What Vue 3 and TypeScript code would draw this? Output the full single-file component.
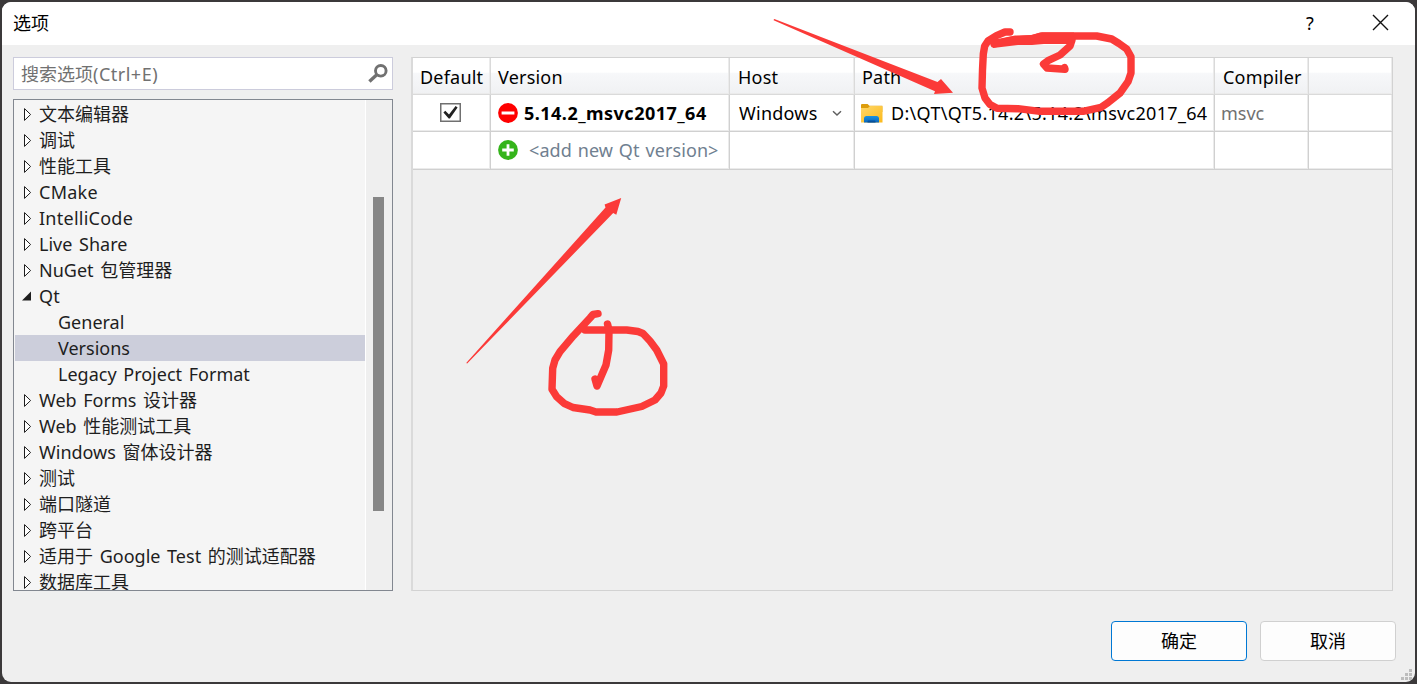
<script setup lang="ts">
interface TreeItem {
  label: string
  kind: 'closed' | 'open' | 'child'
  selected?: boolean
  wide?: boolean
}

const items: TreeItem[] = [
  { label: '文本编辑器', kind: 'closed' },
  { label: '调试', kind: 'closed' },
  { label: '性能工具', kind: 'closed' },
  { label: 'CMake', kind: 'closed', wide: true },
  { label: 'IntelliCode', kind: 'closed', wide: true },
  { label: 'Live Share', kind: 'closed' },
  { label: 'NuGet 包管理器', kind: 'closed' },
  { label: 'Qt', kind: 'open', wide: true },
  { label: 'General', kind: 'child' },
  { label: 'Versions', kind: 'child', selected: true },
  { label: 'Legacy Project Format', kind: 'child' },
  { label: 'Web Forms 设计器', kind: 'closed' },
  { label: 'Web 性能测试工具', kind: 'closed' },
  { label: 'Windows 窗体设计器', kind: 'closed' },
  { label: '测试', kind: 'closed' },
  { label: '端口隧道', kind: 'closed' },
  { label: '跨平台', kind: 'closed' },
  { label: '适用于 Google Test 的测试适配器', kind: 'closed' },
  { label: '数据库工具', kind: 'closed' },
]

const headers: string[] = ['Default', 'Version', 'Host', 'Path', 'Compiler', '']
</script>

<template>
  <div class="desktop">
    <div class="dialog">
      <header class="titlebar">
        <span class="title">选项</span>
        <span class="help">?</span>
        <svg class="close" width="17" height="17" viewBox="0 0 17 17">
          <path d="M1 1 16 16M16 1 1 16" fill="none" stroke="#111" stroke-width="1.4" />
        </svg>
      </header>

      <main class="content">
        <aside class="side">
          <div class="search">
            <span>搜索选项<span class="shortcut">(Ctrl+E)</span></span>
            <svg width="20" height="19" viewBox="0 0 20 19">
              <circle cx="12.8" cy="6.8" r="5.3" fill="none" stroke="#717171" stroke-width="2.9" />
              <path d="M9 10.6 1.4 17.6" fill="none" stroke="#717171" stroke-width="3.4" />
            </svg>
          </div>
          <div class="tree">
            <ul class="list">
              <li
                v-for="item in items"
                :key="item.label"
                class="row"
                :class="[item.kind, { selected: item.selected, wide: item.wide }]"
              >
                <svg v-if="item.kind !== 'child'" class="arrow" width="10" height="15" viewBox="0 0 10 15">
                  <path v-if="item.kind === 'closed'" d="M2.5 1.6V13.4L8.6 7.5Z" fill="#fff" stroke="#1e1e1e" />
                  <path v-else d="M9 2.500V11.500H0Z" fill="#1e1e1e" />
                </svg>
                <span>{{ item.label }}</span>
              </li>
            </ul>
            <div class="track"><div class="thumb"></div></div>
          </div>
        </aside>

        <section class="versions">
          <div class="grid">
            <div v-for="(h, i) in headers" :key="i" class="cell head">{{ h }}</div>

            <div class="cell center">
              <svg class="check" width="21" height="19" viewBox="0 0 21 19">
                <rect x=".75" y=".75" width="19.5" height="17.5" fill="#fff" stroke="#707070" stroke-width="1.5" />
                <path d="M3.400 9.400 5.300 7.800 9 11.600 15.600 3 17.600 4.500 9.900 15.600 8.700 15.600Z" fill="#212121" />
              </svg>
            </div>
            <div class="cell">
              <svg class="badge" width="20" height="20" viewBox="0 0 20 20">
                <circle cx="10" cy="10" r="9.9" fill="#f00" />
                <path d="M3.6 10H16.4" stroke="#fff" stroke-width="3.2" />
              </svg>
              <b class="version">5.14.2_msvc2017_64</b>
            </div>
            <div class="cell host">
              <span>Windows</span>
              <svg width="10" height="7" viewBox="0 0 10 7">
                <path d="M1 1.3 5 5 9 1.3" fill="none" stroke="#606060" stroke-width="1.5" />
              </svg>
            </div>
            <div class="cell path">
              <svg width="22" height="19" viewBox="0 0 22 19">
                <defs>
                  <linearGradient id="folder" x1="0" y1="0" x2="1" y2="1">
                    <stop offset="0" stop-color="#ffd86a" />
                    <stop offset="1" stop-color="#fbb91c" />
                  </linearGradient>
                  <linearGradient id="tray" x1="0" y1="0" x2="0" y2="1">
                    <stop offset="0" stop-color="#1a93e2" />
                    <stop offset="1" stop-color="#0a66bd" />
                  </linearGradient>
                </defs>
                <path d="M0 1Q0 0 1 0H6.6L8.4 1.8H21.4V8H0Z" fill="#dd9d0b" />
                <path d="M0 4H7L9 2H20.4Q21.5 2 21.5 3V18.4H0Z" fill="url(#folder)" />
                <path d="M3 18.4V14.5Q3 12 5.5 12H15.5Q18 12 18 14.5V18.4Z" fill="url(#tray)" />
                <path d="M6.5 18.4V17.4Q6.5 16.4 7.5 16.4H13.5Q14.5 16.4 14.5 17.4V18.4Z" fill="#07509c" />
              </svg>
              <span class="dir">D:\QT\QT5.14.2\5.14.2\msvc2017_64</span>
            </div>
            <div class="cell compiler">msvc</div>
            <div class="cell"></div>

            <div class="cell"></div>
            <div class="cell new">
              <svg class="badge" width="20" height="20" viewBox="0 0 20 20">
                <circle cx="10" cy="10" r="9.9" fill="#35b41b" />
                <path d="M4.2 10H15.8M10 4.2V15.8" stroke="#fff" stroke-width="2.8" />
              </svg>
              <span class="add">&lt;add new Qt version&gt;</span>
            </div>
            <div class="cell"></div>
            <div class="cell"></div>
            <div class="cell"></div>
            <div class="cell"></div>
          </div>
        </section>
      </main>

      <footer class="footer">
        <button class="btn primary">确定</button>
        <button class="btn">取消</button>
      </footer>

      <svg class="grip" width="12" height="12" viewBox="0 0 12 12">
        <path d="M8 0h3v3H8zM4 4h3v3H4zM8 4h3v3H8zM0 8h3v3H0zM4 8h3v3H4zM8 8h3v3H8z" fill="#bdbdbd" />
      </svg>
    </div>

    <svg class="ink" width="1417" height="684" viewBox="0 0 1417 684">
      <g fill="#fb3a38">
        <path d="M774 19 775 19.2 937.5 82 941 79 953 92.8 934 94 935 91.2 773.6 20.2Z" />
        <path d="M466.2 363 605.5 207.5 604.6 204.6 621.2 198 616.3 214.8 613.2 213 467.2 363.6Z" />
        <path d="M993 40 1015 35.500 1032 35 1040 32.500H1074V44H1044L1032 45 1018 45 993 48Z" />
      </g>
      <g fill="none" stroke="#fb3a38" stroke-width="7.4" stroke-linecap="round" stroke-linejoin="round">
        <path d="M598 313.700 593 314.500 590 318 573.500 335.700 560 351.700 555 360 552.700 368.300 552 389.300 556.700 396.700 564 403.300 573 407.500 590 410 596 412H617L641.700 406.500 655 400 661 393 663.700 386V364L656.700 350 650 341 643 333.500 638 331.500 626.700 330H585" />
        <path d="M607.500 324 609 330 608.700 350 606 365 597 386 595 379" />
        <path d="M1010 32 1005 32 996.500 35.700 988 41 984.700 46 983.300 54 982.500 70 982 88 985 98 990 104.500 997 108.300 1018 108.700 1040 111.300H1083L1101 107.300 1108 102.700 1120 93 1128 81.700 1131 73V56.700L1126.700 49 1119 43.500 1111.700 39 1096.700 36H1042L1030 39 1010 40.500 994 44" />
        <path d="M1072 40 1070 46 1060 55 1048 60.700 1043.500 64 1047 68 1065 69.300 1064.500 67.500" />
      </g>
    </svg>
  </div>
</template>

<style>
html,
body {
  margin: 0;
  overflow: hidden;
}
</style>

<style scoped>
.desktop {
  position: relative;
  box-sizing: border-box;
  width: 1417px;
  height: 684px;
  padding: 2px;
  background: #3b393a;
  color: #000;
  font: 18px/26px 'Noto Sans', 'Noto Sans CJK SC', sans-serif;
}
.dialog {
  position: relative;
  display: flex;
  flex-direction: column;
  height: 680px;
  overflow: hidden;
  border-radius: 9px;
  background: #efefef;
}
.titlebar {
  box-sizing: border-box;
  display: flex;
  align-items: center;
  flex: none;
  height: 43px;
  padding: 0 26px 2px 11px;
  background: #fff;
}
.title {
  flex: 1;
}
.help {
  width: 10px;
  margin-right: 56px;
}
.content {
  display: flex;
  gap: 18px;
  height: 534px;
  padding: 12px 22px 0 11px;
}
.side {
  display: flex;
  flex-direction: column;
  gap: 9px;
  width: 380px;
}
.search {
  box-sizing: border-box;
  display: flex;
  align-items: center;
  justify-content: space-between;
  height: 33px;
  padding: 0 4px 0 7px;
  border: 1px solid #ccccdc;
  background: #fff;
  color: #717171;
}
.shortcut {
  letter-spacing: 0.5px;
}
.tree {
  box-sizing: border-box;
  display: flex;
  height: 492px;
  border: 1px solid #828790;
  background: #f5f5f5;
}
.list {
  flex: 1;
  margin: 0;
  padding: 1px 0 0 1px;
  overflow: hidden;
  list-style: none;
  color: #1e1e1e;
  white-space: nowrap;
  word-spacing: 2px;
}
.row {
  display: flex;
  align-items: center;
  height: 26px;
  padding-left: 7px;
}
.wide {
  letter-spacing: 0.25px;
}
.arrow {
  margin-right: 7px;
}
.row.child {
  padding-left: 43px;
}
.selected {
  background: #cccedb;
}
.track {
  width: 26px;
  border-left: 1px solid #fff;
  background: #efefef;
}
.thumb {
  width: 11px;
  height: 314px;
  margin: 97px 0 0 7px;
  background: #868686;
}
.versions {
  box-sizing: border-box;
  width: 982px;
  height: 534px;
  border: 1px solid #d2d2d2;
  border-left: 2px solid #dadada;
}
.grid {
  display: grid;
  grid-template-columns: 78px 239px 125px 360px 94px 83px;
  grid-template-rows: 37px 37px 38px;
}
.cell {
  box-sizing: border-box;
  display: flex;
  align-items: center;
  min-width: 0;
  padding-left: 7px;
  border-right: 1px solid #d0d0d0;
  border-bottom: 1px solid #d0d0d0;
  background: #fff;
  box-shadow: inset -1px -1px 0 #ebebeb;
  white-space: nowrap;
}
.cell:nth-child(6n) {
  border-right: 0;
}
.head {
  padding-top: 1px;
  padding-left: 8px;
  border-color: #dadada;
  background: linear-gradient(#fff 40%, #f7f8fa 41%, #f0f1f3);
  letter-spacing: 0.2px;
}
.head:nth-child(1),
.head:nth-child(2),
.head:nth-child(4) {
  padding-left: 7px;
}
.center {
  justify-content: center;
  padding: 0 2px 2px 0;
}
.badge {
  margin-right: 6px;
}
.version {
  letter-spacing: 0.48px;
}
.host {
  justify-content: space-between;
  padding: 0 12px 0 9px;
  letter-spacing: 0.25px;
}
.path {
  gap: 8px;
  padding-left: 6px;
}
.dir {
  letter-spacing: 0.3px;
}
.compiler {
  padding-left: 6px;
  color: #717171;
}
.new {
  padding-bottom: 1px;
}
.add {
  margin: -1px 0 0 5px;
  color: #708090;
  letter-spacing: 0.1px;
  word-spacing: 1px;
}
.footer {
  display: flex;
  justify-content: flex-end;
  gap: 13px;
  padding: 30px 19px 0 0;
}
.btn {
  box-sizing: border-box;
  width: 136px;
  height: 40px;
  padding: 0;
  border: 1px solid #d0d0d0;
  border-radius: 4px;
  background: #fdfdfd;
  color: #000;
  font: inherit;
}
.primary {
  border-color: #0078d4;
}
.grip {
  position: absolute;
  right: 2px;
  bottom: 1px;
}
.ink {
  position: absolute;
  inset: 0;
  pointer-events: none;
}
</style>
